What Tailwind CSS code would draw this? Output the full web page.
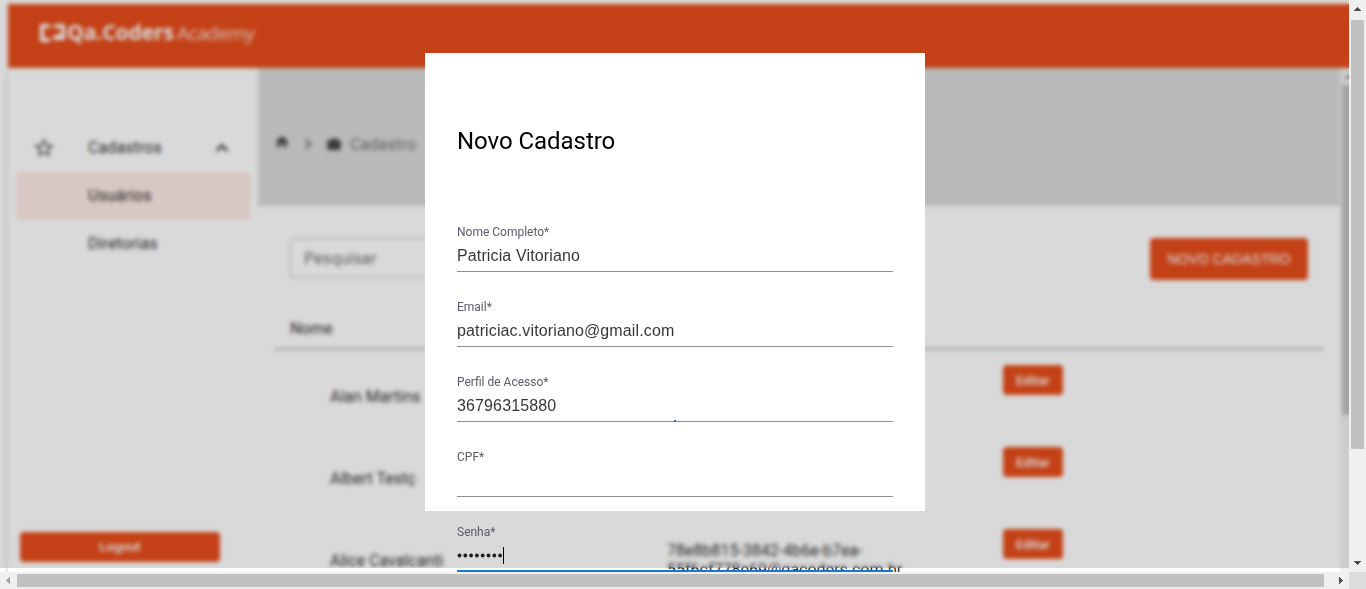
<!DOCTYPE html>
<html lang="pt-BR">
<head>
<meta charset="utf-8">
<title>Qa.Coders Academy</title>
<script src="https://cdn.jsdelivr.net/npm/@tailwindcss/browser@4"></script>
</head>
<body class="overflow-hidden bg-white font-['Roboto',sans-serif]">
<div class="grid h-[589px] w-[1366px] grid-cols-[1349px_17px] grid-rows-[572px_17px]">
  <div class="relative overflow-hidden">
    <!-- page -->
    <div class="ml-2 flex h-[580px] w-[1362px] flex-col pt-1">
      <header class="relative flex h-16 shrink-0 items-center bg-[#e74c1a] pl-[31px] text-white">
        <svg class="mt-[-7px] h-[18px] w-[26px]" viewBox="0 0 26 18" fill="none" stroke="currentColor" stroke-width="4"><path d="M11 2H3v14h8M15 2h9v14M14 14h10" /><path d="M16 13h7" stroke-width="5"/></svg>
        <div class="mt-[-7px] ml-[2px] flex items-baseline font-['Open_Sans',sans-serif] leading-6"><span class="inline-block w-[107px] text-[21px] font-bold tracking-[-0.05px]">Qa.Coders</span><span class="ml-[3px] text-[19px] font-normal tracking-[-0.6px] text-white/80">Academy</span></div>
      </header>
      <div class="flex min-h-0 flex-1">
        <aside class="w-[250px] shrink-0 px-2 pt-[56px] text-base tracking-[0.1px] text-black/85 shadow-[0_4px_5px_rgba(0,0,0,0.25)]">
          <div class="flex h-12 items-center pl-4">
            <svg class="h-6 w-6" viewBox="0 0 24 24" fill="#555"><path d="m22 9.240-7.190-.62L12 2 9.190 8.630 2 9.240l5.460 4.730L5.820 21 12 17.270 18.180 21l-1.630-7.030L22 9.240zM12 15.400l-3.760 2.270 1-4.280-3.320-2.880 4.380-.38L12 6.100l1.710 4.040 4.380.38-3.320 2.880 1 4.280L12 15.400z"/></svg>
            <span class="ml-8 w-[122px]">Cadastros</span>
            <svg class="h-6 w-6" viewBox="0 0 24 24" fill="none" stroke="#333" stroke-width="2.300"><path d="m6.500 15 5.500-5.500 5.500 5.500"/></svg>
          </div>
          <div class="flex h-12 items-center rounded-sm bg-[#fdebe6] pl-[72px]">Usuários</div>
          <div class="flex h-12 items-center pl-[72px]">Diretorias</div>
          <button class="mt-[264px] ml-1 flex h-[30px] w-[200px] items-center justify-center rounded bg-[#e74c1a] text-[13px] font-medium text-white">Logout</button>
        </aside>
        <main class="relative w-[1082px] shrink-0 overflow-hidden bg-white">
          <nav class="flex h-[138px] items-start bg-[#dadada] pt-[66px] pl-4">
            <svg class="h-4 w-4" viewBox="0 0 24 24" fill="#444"><path d="M10 20v-6h4v6h5v-8h3L12 3 2 12h3v8z"/></svg>
            <svg class="mt-[2px] ml-[10px] h-4 w-4" viewBox="0 0 24 24" fill="none" stroke="#555" stroke-width="2.800"><path d="m9 5 6 7-6 7"/></svg>
            <svg class="mt-[2px] ml-[10px] h-4 w-4" viewBox="0 0 24 24" fill="#444"><path d="M8 6V3h8v3h4q2 0 2 2v11q0 2-2 2H4q-2 0-2-2V8q0-2 2-2zm2 0h4V5h-4z"/></svg>
            <span class="-mt-px ml-2 text-base tracking-[0.15px] text-black/50">Cadastro</span>
          </nav>
          <div class="flex h-[112px] items-start justify-between pt-8 pr-8 pl-8">
            <div class="flex h-10 w-[230px] items-center rounded border border-black/25 pt-[2px] pl-[13px] text-base tracking-[0.15px] text-black/60">Pesquisar</div>
            <button class="h-[42px] w-[158px] rounded bg-[#e74c1a] font-['Liberation_Sans',sans-serif] text-[14px] text-white">NOVO CADASTRO</button>
          </div>
          <div class="ml-4 flex h-8 w-[1050px] items-start border-b-2 border-black/25 pl-4 text-base leading-[22px] font-medium text-black/70">Nome</div>
          <div class="flex h-[82px] items-start pt-[15px] pl-[72px] text-base text-black/85"><span class="w-[673px] pt-[20px]">Alan Martins</span><button class="h-[30px] w-[60px] rounded bg-[#e74c1a] pt-px text-[13px] font-medium text-white">Editar</button></div>
          <div class="flex h-[82px] items-start pt-[15px] pl-[72px] text-base text-black/85"><span class="w-[673px] pt-[20px]">Albert Testç</span><button class="h-[30px] w-[60px] rounded bg-[#e74c1a] pt-px text-[13px] font-medium text-white">Editar</button></div>
          <div class="flex h-[82px] items-start pt-[15px] pl-[72px] text-base text-black/85"><span class="w-[337px] pt-[20px]">Alice Cavalcanti</span><div class="w-[336px] pt-[12px] leading-[19px]">78e8b815-3842-4b6e-b7ea-<br>55f6cf778e69@qacoders.com.br</div><button class="h-[30px] w-[60px] rounded bg-[#e74c1a] pt-px text-[13px] font-medium text-white">Editar</button></div>
        </main>
        <!-- inner scrollbar -->
        <div class="flex w-[17px] shrink-0 flex-col items-center bg-[#f0f0f0]">
          <svg class="h-[17px] w-[17px]" viewBox="0 0 17 17" fill="#999"><path d="M4.500 11h8l-4-5z"/></svg>
          <div class="h-[330px] w-[13px] bg-[#c1c1c1]"></div>
        </div>
      </div>
    </div>

    <!-- modal over the page -->
    <div class="absolute top-0 left-0 h-[568px] w-[1349px] bg-black/15 backdrop-blur-[2px]"></div>
    <div class="absolute top-[53px] left-[425px] h-[458px] w-[500px] bg-white px-8 pt-[72px]">
      <h1 class="h-[99px] text-2xl tracking-[-0.05px] text-black">Novo Cadastro</h1>
      <div class="flex flex-col font-['Liberation_Sans',sans-serif] text-base leading-[25px] tracking-[0.13px] text-black/80">
        <label class="h-[75px]"><span class="block h-[19px] font-['Roboto',sans-serif] text-xs leading-[16px] tracking-normal text-[#5c5a6c]">Nome Completo*</span><span class="block h-[29px] border-b border-[#8e8e92]">Patricia Vitoriano</span></label>
        <label class="h-[75px]"><span class="block h-[19px] font-['Roboto',sans-serif] text-xs leading-[16px] tracking-normal text-[#5c5a6c]">Email*</span><span class="block h-[29px] border-b border-[#8e8e92]">patriciac.vitoriano@gmail.com</span></label>
        <label class="h-[75px]"><span class="block h-[19px] font-['Roboto',sans-serif] text-xs leading-[16px] tracking-normal text-[#5c5a6c]">Perfil de Acesso*</span><span class="relative block h-[29px] border-b border-[#8e8e92]">36796315880<i class="absolute -bottom-px left-[217px] h-[2px] w-[2px] bg-[#1976d2]"></i></span></label>
        <label class="h-[75px]"><span class="block h-[19px] font-['Roboto',sans-serif] text-xs leading-[16px] tracking-normal text-[#5c5a6c]">CPF*</span><span class="block h-[29px] border-b border-[#8e8e92]"></span></label>
        <label class="h-[75px]"><span class="block h-[19px] font-['Roboto',sans-serif] text-xs leading-[16px] tracking-normal text-[#5c5a6c]">Senha*</span><span class="flex h-[29px] items-start border-b-2 border-[#1976d2]"><svg class="mt-[10px] h-[5px] w-[46px]" viewBox="0 0 46 5" fill="#1c1c1c"><circle cx="2.500" cy="2.500" r="1.900"/><circle cx="8.300" cy="2.500" r="1.900"/><circle cx="14.100" cy="2.500" r="1.900"/><circle cx="19.900" cy="2.500" r="1.900"/><circle cx="25.700" cy="2.500" r="1.900"/><circle cx="31.500" cy="2.500" r="1.900"/><circle cx="37.300" cy="2.500" r="1.900"/><circle cx="43.100" cy="2.500" r="1.900"/></svg><i class="mt-[4px] h-[17px] w-px bg-black"></i></span></label>
      </div>
    </div>
  </div>

  <!-- vertical scrollbar -->
  <div class="flex flex-col items-center bg-[#f0f0f0]">
    <svg class="h-5 w-[17px] shrink-0" viewBox="0 0 17 20" fill="#505050" shape-rendering="crispEdges"><path d="M5 11h7L8.500 7z"/></svg>
    <div class="h-[429px] w-[13px] shrink-0 bg-[#c1c1c1]"></div>
    <svg class="mt-[106px] h-[17px] w-[17px]" viewBox="0 0 17 17" fill="#505050" shape-rendering="crispEdges"><path d="M5 6h7l-3.500 4z"/></svg>
  </div>
  <!-- horizontal scrollbar -->
  <div class="flex items-center bg-[#f0f0f0]">
    <svg class="h-[17px] w-[17px]" viewBox="0 0 17 17" fill="#a3a3a3" shape-rendering="crispEdges"><path d="M10 5v7L6 8.500z"/></svg>
    <div class="h-[13px] w-[1307px] bg-[#c1c1c1]"></div>
    <svg class="ml-[8px] h-[17px] w-[17px]" viewBox="0 0 17 17" fill="#505050" shape-rendering="crispEdges"><path d="M7 5v7l4-3.500z"/></svg>
  </div>
  <div class="bg-[#dcdcdc]"></div>
</div>
</body>
</html>
